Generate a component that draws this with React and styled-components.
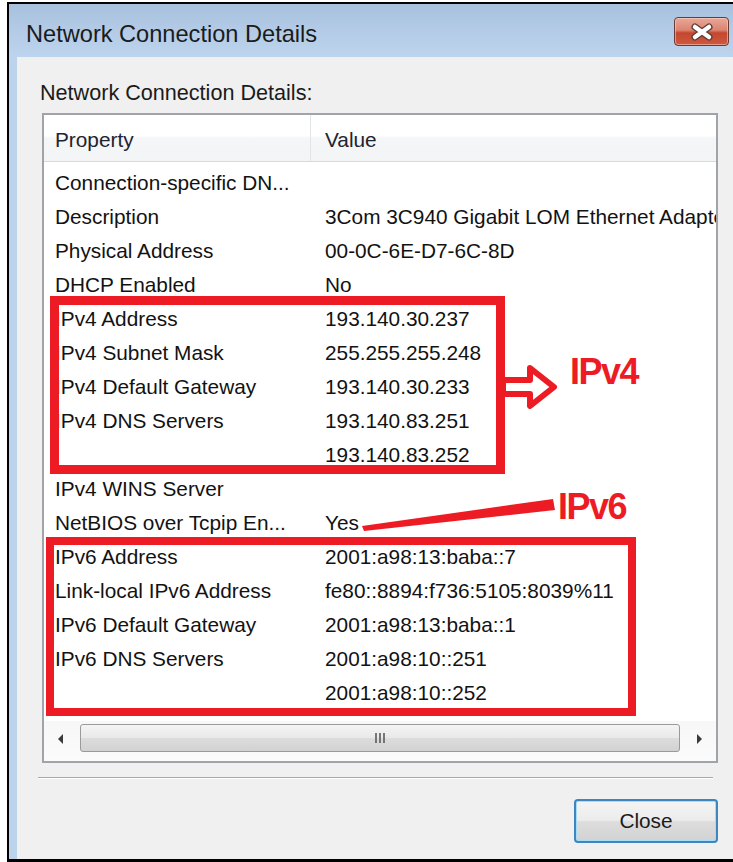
import React from 'react'
import styled, { createGlobalStyle } from 'styled-components'

const GlobalStyle = createGlobalStyle`
  html, body {
    margin: 0;
    padding: 0;
    background: #ffffff;
  }
  body {
    font-family: "Liberation Sans", Arial, sans-serif;
    color: #111;
  }
`

const details = [
  ['Connection-specific DN...', ''],
  ['Description', '3Com 3C940 Gigabit LOM Ethernet Adapter'],
  ['Physical Address', '00-0C-6E-D7-6C-8D'],
  ['DHCP Enabled', 'No'],
  ['IPv4 Address', '193.140.30.237'],
  ['IPv4 Subnet Mask', '255.255.255.248'],
  ['IPv4 Default Gateway', '193.140.30.233'],
  ['IPv4 DNS Servers', '193.140.83.251'],
  ['', '193.140.83.252'],
  ['IPv4 WINS Server', ''],
  ['NetBIOS over Tcpip En...', 'Yes'],
  ['IPv6 Address', '2001:a98:13:baba::7'],
  ['Link-local IPv6 Address', 'fe80::8894:f736:5105:8039%11'],
  ['IPv6 Default Gateway', '2001:a98:13:baba::1'],
  ['IPv6 DNS Servers', '2001:a98:10::251'],
  ['', '2001:a98:10::252'],
]

const Page = styled.div`
  position: relative;
  width: 733px;
  height: 862px;
  overflow: hidden;
  background: #fff;
`

const Window = styled.div`
  margin: 2px 0 0 7px;
  width: 726px;
  height: 855px;
  border-left: 2px solid #000;
  border-top: 2px solid #000;
  border-bottom: 3px solid #000;
  display: flex;
  flex-direction: column;
  background: linear-gradient(90deg, #bcd3ec 0%, #c6daf0 100%);
`

const TitleBar = styled.div`
  height: 53px;
  display: flex;
  align-items: center;
  justify-content: space-between;
  padding: 0 6px 0 17px;
  background: linear-gradient(180deg, #a7c0dd 0%, #b3cbe6 50%, #bcd4ed 100%);
`

const Title = styled.div`
  font-size: 23.6px;
  color: #1b1b1b;
  padding-top: 8px;
`

const CloseBox = styled.div`
  width: 55px;
  height: 29px;
  margin-top: 2px;
  border: 1px solid #6b3a34;
  border-radius: 4px;
  box-sizing: border-box;
  display: flex;
  align-items: center;
  justify-content: center;
  background: linear-gradient(180deg, #e9a898 0%, #dc8370 45%, #c4472f 55%, #cd5a3f 100%);
  box-shadow: inset 0 0 0 1px rgba(255, 220, 210, 0.5);
`

const Client = styled.div`
  flex: 1;
  margin-left: 8px;
  background: #f0f0f0;
  padding: 24px 0 0 23px;
  display: flex;
  flex-direction: column;
`

const Label = styled.div`
  font-size: 21.6px;
  line-height: 24px;
  color: #1b1b1b;
`

const ListBox = styled.div`
  margin: 8px 0 0 2px;
  width: 676px;
  height: 650px;
  box-sizing: border-box;
  border: 2px solid #a0a4aa;
  background: #fff;
  display: flex;
  flex-direction: column;
  overflow: hidden;
`

const HeaderRow = styled.div`
  display: grid;
  grid-template-columns: 267px 1fr;
  height: 46px;
  border-bottom: 1px solid #d6d9dd;
  background: linear-gradient(180deg, #ffffff 0%, #ffffff 45%, #f5f6f7 50%, #f3f4f6 100%);
`

const HeaderCell = styled.div`
  display: flex;
  align-items: center;
  padding: 4px 0 0 ${({ $pad }) => $pad}px;
  font-size: 20.8px;
  color: #1e2430;
  border-right: ${({ $divider }) => ($divider ? '1px solid #e1e4e8' : 'none')};
`

const Rows = styled.div`
  flex: 1;
  padding-top: 4px;
  overflow: hidden;
`

const Row = styled.div`
  display: grid;
  grid-template-columns: 267px 1fr;
  height: 34px;
  align-items: center;
  font-size: 20.8px;
  color: #121212;
  white-space: nowrap;
`

const Cell = styled.div`
  padding-left: ${({ $pad }) => $pad}px;
  overflow: hidden;
`

const HScroll = styled.div`
  height: 40px;
  display: flex;
  align-items: flex-start;
  padding-top: 3px;
  box-sizing: border-box;
  background: linear-gradient(180deg, #f7f7f7 0%, #fbfbfb 100%);
`

const Arrow = styled.div`
  width: 34px;
  height: 30px;
  display: flex;
  align-items: center;
  justify-content: center;
`

const Thumb = styled.div`
  flex: 1;
  height: 28px;
  margin: 0 2px;
  box-sizing: border-box;
  border: 1px solid #9a9a9a;
  border-radius: 3px;
  background: linear-gradient(180deg, #f4f4f4 0%, #e9e9e9 48%, #dcdcdc 52%, #d2d2d2 100%);
  display: flex;
  align-items: center;
  justify-content: center;
`

const Separator = styled.div`
  margin: 14px 0 0 -2px;
  width: 675px;
  height: 1px;
  background: #a9a9a9;
  border-bottom: 1px solid #fff;
`

const Footer = styled.div`
  width: 678px;
  display: flex;
  justify-content: flex-end;
  margin-top: 20px;
`

const Button = styled.button`
  width: 144px;
  height: 44px;
  border: 2px solid #3d86bf;
  border-radius: 4px;
  font-family: "Liberation Sans", Arial, sans-serif;
  font-size: 20.8px;
  color: #1b1b1b;
  background: linear-gradient(180deg, #f4f4f4 0%, #ececec 48%, #dddddd 52%, #d2d2d2 100%);
  box-shadow: inset 0 0 0 1px #a8dcf6;
`

const Overlay = styled.svg`
  position: absolute;
  left: 0;
  top: 0;
  pointer-events: none;
`

const Note = styled.span`
  position: absolute;
  left: ${({ $x }) => $x}px;
  top: ${({ $y }) => $y}px;
  font-family: "Liberation Sans", Arial, sans-serif;
  font-weight: bold;
  font-size: 36px;
  letter-spacing: -1.5px;
  color: #ed1c24;
  line-height: 1;
`

const Grip = () => (
  <svg width="12" height="12" viewBox="0 0 12 12">
    <path d="M2 1v10M6 1v10M10 1v10" stroke="#5a5a5a" strokeWidth="1.6" />
  </svg>
)

const CloseGlyph = () => (
  <svg width="28" height="18" viewBox="0 0 28 18">
    <path d="M7 4l14 10M21 4L7 14" stroke="#5b3b36" strokeWidth="7" strokeLinecap="round" />
    <path d="M7 4l14 10M21 4L7 14" stroke="#ffffff" strokeWidth="4.5" strokeLinecap="round" />
  </svg>
)

const App = () => {
  return (
    <>
      <GlobalStyle />
      <Page>
        <Window>
          <TitleBar>
            <Title>Network Connection Details</Title>
            <CloseBox>
              <CloseGlyph />
            </CloseBox>
          </TitleBar>
          <Client>
            <Label>Network Connection Details:</Label>
            <ListBox>
              <HeaderRow>
                <HeaderCell $pad={11} $divider>Property</HeaderCell>
                <HeaderCell $pad={14}>Value</HeaderCell>
              </HeaderRow>
              <Rows>
                {details.map(([name, value], i) => (
                  <Row key={i}>
                    <Cell $pad={11}>{name}</Cell>
                    <Cell $pad={14}>{value}</Cell>
                  </Row>
                ))}
              </Rows>
              <HScroll>
                <Arrow>
                  <svg width="8" height="12" viewBox="0 0 8 12">
                    <path d="M6 1L1 6l5 5z" fill="#3a3a3a" />
                  </svg>
                </Arrow>
                <Thumb>
                  <Grip />
                </Thumb>
                <Arrow>
                  <svg width="8" height="12" viewBox="0 0 8 12">
                    <path d="M2 1l5 5-5 5z" fill="#3a3a3a" />
                  </svg>
                </Arrow>
              </HScroll>
            </ListBox>
            <Separator />
            <Footer>
              <Button>Close</Button>
            </Footer>
          </Client>
        </Window>

        {/* red callouts drawn over the dialog */}
        <Overlay width="733" height="862" viewBox="0 0 733 862">
          <rect x="54.5" y="300.5" width="446" height="169" fill="none" stroke="#ed1c24" strokeWidth="9" />
          <polygon
            points="503,380 530,380 530,368 554,387 530,406 530,394 503,394"
            fill="#fff"
            stroke="#ed1c24"
            strokeWidth="6"
            strokeLinejoin="round"
          />
          <rect x="50" y="541" width="582" height="171" fill="none" stroke="#ed1c24" strokeWidth="8" />
          <polygon points="362,526 553,499 555,510 364,531" fill="#ed1c24" />
        </Overlay>
        <Note $x={570} $y={354}>IPv4</Note>
        <Note $x={558} $y={489}>IPv6</Note>
      </Page>
    </>
  )
}

export default App
